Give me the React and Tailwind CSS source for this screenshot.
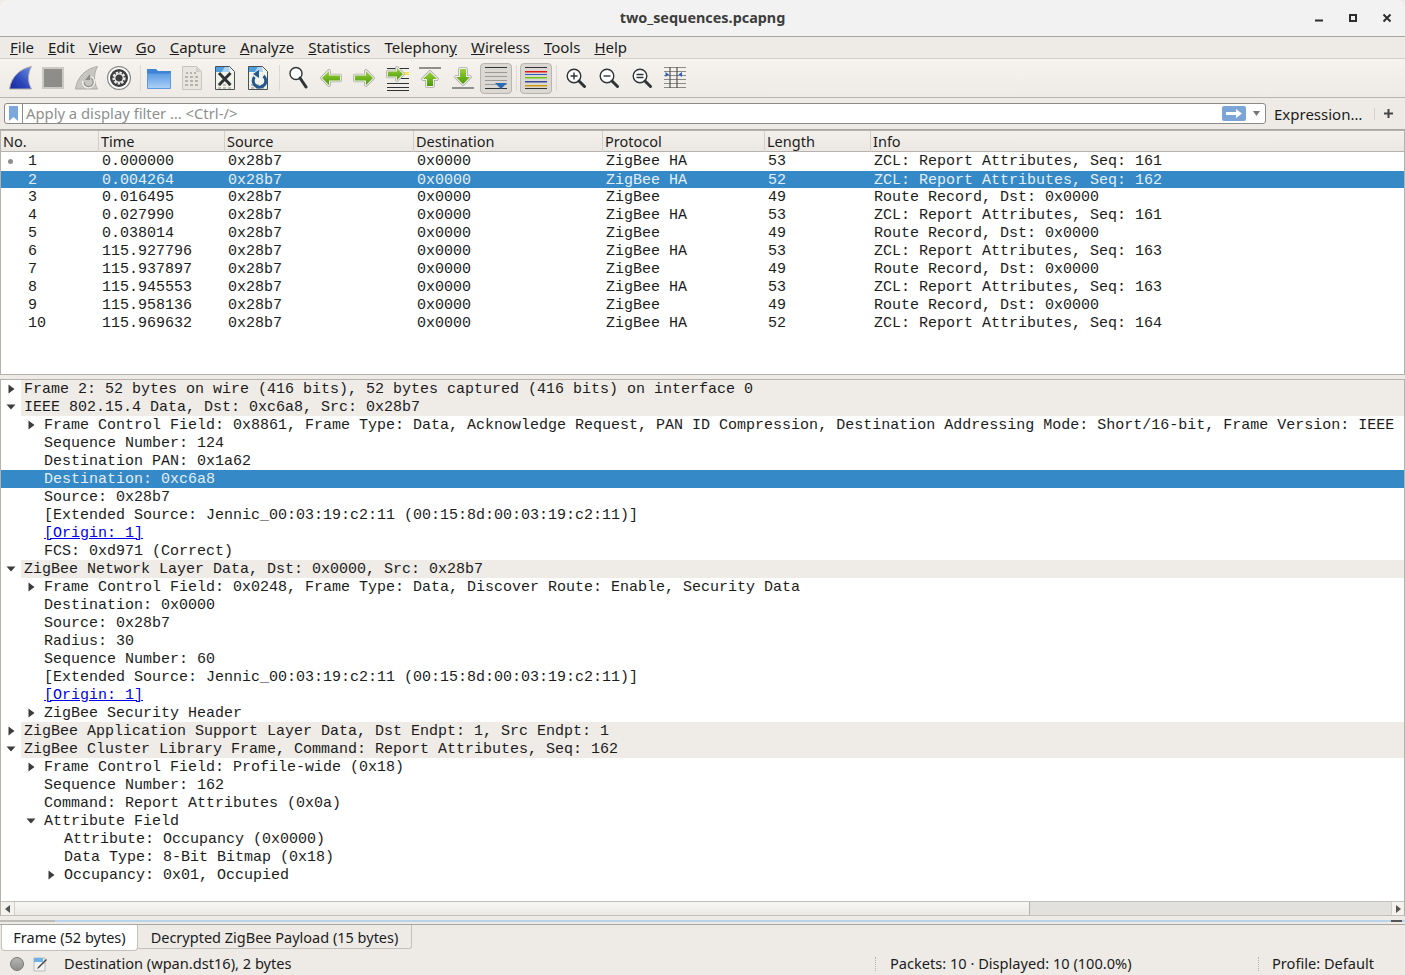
import React from 'react';

const UI_FONT = "font-['Noto_Sans',sans-serif]";

const MENUS = [
  ['', 'F', 'ile'], ['', 'E', 'dit'], ['', 'V', 'iew'], ['', 'G', 'o'], ['', 'C', 'apture'], ['', 'A', 'nalyze'],
  ['', 'S', 'tatistics'], ['Telephon', 'y', ''], ['', 'W', 'ireless'], ['', 'T', 'ools'], ['', 'H', 'elp'],
];

const PACKETS = [
  ['1', '0.000000', 'ZigBee HA', '53', 'ZCL: Report Attributes, Seq: 161'],
  ['2', '0.004264', 'ZigBee HA', '52', 'ZCL: Report Attributes, Seq: 162'],
  ['3', '0.016495', 'ZigBee', '49', 'Route Record, Dst: 0x0000'],
  ['4', '0.027990', 'ZigBee HA', '53', 'ZCL: Report Attributes, Seq: 161'],
  ['5', '0.038014', 'ZigBee', '49', 'Route Record, Dst: 0x0000'],
  ['6', '115.927796', 'ZigBee HA', '53', 'ZCL: Report Attributes, Seq: 163'],
  ['7', '115.937897', 'ZigBee', '49', 'Route Record, Dst: 0x0000'],
  ['8', '115.945553', 'ZigBee HA', '53', 'ZCL: Report Attributes, Seq: 163'],
  ['9', '115.958136', 'ZigBee', '49', 'Route Record, Dst: 0x0000'],
  ['10', '115.969632', 'ZigBee HA', '52', 'ZCL: Report Attributes, Seq: 164'],
];

// level, arrow (r = collapsed, d = expanded), text, flags
const DETAILS = [
  [0, 'r', 'Frame 2: 52 bytes on wire (416 bits), 52 bytes captured (416 bits) on interface 0'],
  [0, 'd', 'IEEE 802.15.4 Data, Dst: 0xc6a8, Src: 0x28b7'],
  [1, 'r', 'Frame Control Field: 0x8861, Frame Type: Data, Acknowledge Request, PAN ID Compression, Destination Addressing Mode: Short/16-bit, Frame Version: IEEE'],
  [1, '', 'Sequence Number: 124'],
  [1, '', 'Destination PAN: 0x1a62'],
  [1, '', 'Destination: 0xc6a8', 'selected'],
  [1, '', 'Source: 0x28b7'],
  [1, '', '[Extended Source: Jennic_00:03:19:c2:11 (00:15:8d:00:03:19:c2:11)]'],
  [1, '', '[Origin: 1]', 'link'],
  [1, '', 'FCS: 0xd971 (Correct)'],
  [0, 'd', 'ZigBee Network Layer Data, Dst: 0x0000, Src: 0x28b7'],
  [1, 'r', 'Frame Control Field: 0x0248, Frame Type: Data, Discover Route: Enable, Security Data'],
  [1, '', 'Destination: 0x0000'],
  [1, '', 'Source: 0x28b7'],
  [1, '', 'Radius: 30'],
  [1, '', 'Sequence Number: 60'],
  [1, '', '[Extended Source: Jennic_00:03:19:c2:11 (00:15:8d:00:03:19:c2:11)]'],
  [1, '', '[Origin: 1]', 'link'],
  [1, 'r', 'ZigBee Security Header'],
  [0, 'r', 'ZigBee Application Support Layer Data, Dst Endpt: 1, Src Endpt: 1'],
  [0, 'd', 'ZigBee Cluster Library Frame, Command: Report Attributes, Seq: 162'],
  [1, 'r', 'Frame Control Field: Profile-wide (0x18)'],
  [1, '', 'Sequence Number: 162'],
  [1, '', 'Command: Report Attributes (0x0a)'],
  [1, 'd', 'Attribute Field'],
  [2, '', 'Attribute: Occupancy (0x0000)'],
  [2, '', 'Data Type: 8-Bit Bitmap (0x18)'],
  [2, 'r', 'Occupancy: 0x01, Occupied'],
];

const Ico = ({ children, w = 24 }) => (
  <svg width={w} height="26" viewBox={`0 0 ${w} 26`} className="shrink-0 block">{children}</svg>
);

const Sep = () => <div className="w-px h-[26px] bg-[#dcd8d2] shrink-0" />;
const Gap = () => <div className="w-[9px] shrink-0" />;

const Defs = () => (
  <svg width="0" height="0" className="absolute">
    <defs>
      <linearGradient id="arrowGreen" x1="0" y1="0" x2="0" y2="1">
        <stop offset="0" stopColor="#9ad03a" />
        <stop offset="1" stopColor="#4a9a08" />
      </linearGradient>
      <linearGradient id="sharkBlue" x1="1" y1="0" x2="0" y2="1">
        <stop offset="0" stopColor="#6f8fe6" />
        <stop offset="0.6" stopColor="#2a44b8" />
        <stop offset="1" stopColor="#14299a" />
      </linearGradient>
      <linearGradient id="folderBlue" x1="0" y1="0" x2="0" y2="1">
        <stop offset="0" stopColor="#5c9ce4" />
        <stop offset="1" stopColor="#b0d2f6" />
      </linearGradient>
    </defs>
  </svg>
);

const GreenArrow = ({ d }) => (
  <>
    <path d={d} fill="#aaa8a2" stroke="#aaa8a2" strokeWidth="3.6" strokeLinejoin="round" />
    <path d={d} fill="#fff" stroke="#f4f3f0" strokeWidth="1.8" strokeLinejoin="round" />
    <path d={d} fill="url(#arrowGreen)" />
  </>
);

const MagGlass = ({ children }) => (
  <>
    <circle cx="10" cy="11" r="6.8" fill="#fff" stroke="#2e3436" strokeWidth="1.4" />
    <path d="M15 16l5.5 5.5" stroke="#2e3436" strokeWidth="3" strokeLinecap="round" />
    {children}
  </>
);

const Lines = ({ ys, x1 = 1, x2 = 23, color = '#2e3436' }) =>
  ys.map((y) => <path key={y} d={`M${x1} ${y}H${x2}`} stroke={color} strokeWidth="1" />);

// the capture file icons share a page with a folded blue corner
const DocBase = () => (
  <>
    <path d="M2.5 1.5h14l5 5v18h-19z" fill="#f1f2e8" stroke="#4a4f52" />
    <path d="M3 2h9l-3 5H3z" fill="#4f9fe0" />
    <path d="M12 2h4l1 5H9z" fill="#a9d2f2" />
    <path d="M5 20h3M10 20h3M15 20h3M5 23h3M10 23h3M15 23h3" stroke="#8f8f8a" strokeWidth="1.2" />
  </>
);

function Toolbar() {
  return (
    <div className="h-[39px] flex items-center bg-gradient-to-b from-[#f6f3ee] to-[#eeebe6] border-b border-[#b8b5b0] pl-[8px] shrink-0">
      {/* start capture */}
      <Ico>
        <path d="M1.5 24C3 12 12 3.5 23.5 1.5C19.5 9 19.5 17 23.5 24Z" fill="url(#sharkBlue)" stroke="#b3b1ab" strokeWidth="1" />
      </Ico>
      <Gap />
      <Ico>
        <rect x="2" y="3" width="20" height="20" fill="#8e8d89" stroke="#cbc9c4" strokeWidth="2" />
      </Ico>
      <Gap />
      <Ico>
        <path d="M1.5 24C3 12 12 3.5 23.5 1.5C19.5 9 19.5 17 23.5 24Z" fill="#c8c6c1" stroke="#adaba5" strokeWidth="1" />
        <path d="M17 12a5.5 5.5 0 1 1-8 4" fill="none" stroke="#f2f1ee" strokeWidth="2.2" />
        <path d="M16 9v6h-5z" fill="#8f8d89" />
        <path d="M17 13a4.6 4.6 0 1 1-7 4" fill="none" stroke="#8f8d89" strokeWidth="1.2" />
      </Ico>
      <Gap />
      <Ico>
        <circle cx="12" cy="13" r="11.4" fill="#fff" stroke="#858585" strokeWidth="1.2" />
        <circle cx="12" cy="13" r="9" fill="#3d3d3d" />
        <circle cx="12" cy="13" r="5.4" fill="none" stroke="#ececec" strokeWidth="2.4" strokeDasharray="2.4 1.2" />
        <circle cx="12" cy="13" r="4.2" fill="none" stroke="#ececec" strokeWidth="1.2" />
        <circle cx="12" cy="13" r="2.2" fill="#3d3d3d" />
      </Ico>
      <Gap />
      <Sep />
      <div className="w-[6px] shrink-0" />
      {/* open, save, close, reload */}
      <Ico>
        <path d="M0 4h9l2 2h13v18H0z" fill="#3f83d2" />
        <path d="M0 8.5h24V24H0z" fill="url(#folderBlue)" />
        <path d="M0.5 8.5v15h23v-15" fill="none" stroke="#5d9ae0" />
      </Ico>
      <Gap />
      <Ico>
        <path d="M2.5 1.5h14l5 5v18h-19z" fill="#e8e5df" stroke="#c6c4be" />
        <path d="M16 2v5h5z" fill="#cfccc6" />
        <path d="M6 8h2M10 8h2M14 8h2M5 12h3M10 12h3M15 12h3M5 16h3M10 16h3M15 16h3M5 20h3M10 20h3M15 20h3" stroke="#a5a39e" strokeWidth="1.6" />
      </Ico>
      <Gap />
      <Ico>
        <DocBase />
        <path d="M6 8l11.5 12M17.5 8L6 20" stroke="#2e3436" strokeWidth="3" />
      </Ico>
      <Gap />
      <Ico>
        <DocBase />
        <path d="M17.5 11a6.3 6.3 0 1 1-9 1" fill="none" stroke="#24588f" strokeWidth="3" />
        <path d="M13 5v8l-6-4z" fill="#24588f" />
      </Ico>
      <Gap />
      <Sep />
      <div className="w-[6px] shrink-0" />
      {/* find */}
      <Ico>
        <circle cx="10" cy="8.5" r="6" fill="#fff" stroke="#2e3436" strokeWidth="1.4" />
        <path d="M14 13l6 9" stroke="#2e3436" strokeWidth="3" strokeLinecap="round" />
      </Ico>
      <Gap />
      <Ico>
        <GreenArrow d="M3 13l7-7v4.5h11v5H10V20z" />
      </Ico>
      <Gap />
      <Ico>
        <GreenArrow d="M21 13l-7-7v4.5H3v5h11V20z" />
      </Ico>
      <Gap />
      <Ico>
        <Lines ys={[3.5, 18.5, 22.5, 25.5]} x1={2} x2={24} />
        <path d="M16 7h8v3h-8z" fill="#f7e25b" />
        <path d="M16 13.5H24" stroke="#2e3436" />
        <GreenArrow d="M18 9l-6-6v3.5H3v5h9V15z" />
      </Ico>
      <Gap />
      <Ico>
        <path d="M1 3H23" stroke="#8f8f8c" strokeWidth="2" />
        <GreenArrow d="M12 7l7 7h-4v7H9v-7H5z" />
      </Ico>
      <Gap />
      <Ico>
        <GreenArrow d="M12 19l7-7h-4V4H9v8H5z" />
        <path d="M1 23H23" stroke="#8f8f8c" strokeWidth="2" />
      </Ico>
      <div className="w-[5px] shrink-0" />
      {/* autoscroll, pressed */}
      <div className="w-[32px] h-[31px] rounded-[4px] border border-[#b8b5b0] bg-[#dbd8d3] flex items-center justify-center shrink-0">
        <Ico>
          <Lines ys={[2.5, 23.5]} />
          <Lines ys={[7.5, 11.5, 15.5, 19.5]} color="#9c9a96" />
          <path d="M11 18h12l-6 6z" fill="#2a6bb5" />
        </Ico>
      </div>
      <div className="w-[4px] shrink-0" />
      <Sep />
      <div className="w-[3px] shrink-0" />
      <div className="w-[32px] h-[31px] rounded-[4px] border border-[#b8b5b0] bg-[#dbd8d3] flex items-center justify-center shrink-0">
        <svg width="24" height="26" viewBox="0 0 24 26" className="shrink-0 block">
          <rect x="1" y="2" width="22" height="1" fill="#2e3436" />
          <rect x="1" y="6" width="22" height="1.5" fill="#e01818" />
          <rect x="1" y="9" width="22" height="1" fill="#2a5fbe" />
          <rect x="1" y="12" width="22" height="1.5" fill="#74c214" />
          <rect x="1" y="16" width="22" height="1.5" fill="#3a4a9a" />
          <rect x="1" y="20" width="22" height="1.5" fill="#d09a0c" />
          <rect x="1" y="23" width="22" height="1" fill="#2e3436" />
        </svg>
      </div>
      <div className="w-[4px] shrink-0" />
      <Sep />
      <div className="w-[7px] shrink-0" />
      <Ico>
        <MagGlass><path d="M6.5 11h7M10 7.5v7" stroke="#2e3436" strokeWidth="1.4" /></MagGlass>
      </Ico>
      <Gap />
      <Ico>
        <MagGlass><path d="M6.5 11h7" stroke="#2e3436" strokeWidth="1.4" /></MagGlass>
      </Ico>
      <Gap />
      <Ico>
        <MagGlass><path d="M6.5 9.5h7M6.5 12.5h7" stroke="#2e3436" strokeWidth="1.4" /></MagGlass>
      </Ico>
      <Gap />
      <Ico>
        <Lines ys={[2.5, 6.5, 10.5, 14.5, 18.5, 22.5]} color="#8a8a87" />
        <path d="M7 2v21M14 2v21" stroke="#555" strokeWidth="1.2" />
        <path d="M2.5 7l3.5 2.5L2.5 12zM19 7l-3.5 2.5L19 12z" fill="#2a5fbe" />
      </Ico>
    </div>
  );
}

function FilterBar() {
  return (
    <div className="h-[32px] flex items-center bg-[#eeebe6] border-b border-[#a9a6a1] pl-[4px] shrink-0">
      <div className="w-[1262px] h-[21px] bg-white border border-[#8c8a86] rounded-[3px] flex items-center">
        <div className="w-[18px] h-full border-r border-[#8c8a86] flex items-center justify-center shrink-0">
          <svg width="9" height="15" viewBox="0 0 9 15" className="block">
            <path d="M0 0h9v15L4.5 11 0 15z" fill="#7ba7dc" />
          </svg>
        </div>
        <span className="pl-[3px] text-[14.8px] text-[#8f8f8d] grow leading-none">Apply a display filter … &lt;Ctrl-/&gt;</span>
        <div className="w-[24px] h-[15px] rounded-[2px] bg-[#7aa5d6] flex items-center justify-center mr-[6px] shrink-0">
          <svg width="18" height="11" viewBox="0 0 18 11" className="block">
            <path d="M1 4h10V1l6 4.5L11 10V7H1z" fill="#fff" />
          </svg>
        </div>
        <svg width="10" height="6" viewBox="0 0 10 6" className="block mr-[3px] shrink-0">
          <path d="M1 0h7L4.5 5z" fill="#777" />
        </svg>
      </div>
      <span className="ml-[8px] mt-[2px] text-[15px] text-[#1c1c1c] leading-none whitespace-nowrap">Expression…</span>
      <div className="ml-[12px] w-px h-[12px] bg-[#d5d2cd]" />
      <svg width="9" height="9" viewBox="0 0 9 9" className="block ml-[9px]">
        <path d="M4.5 0v9M0 4.5h9" stroke="#444" strokeWidth="2" />
      </svg>
    </div>
  );
}

const COLS = 'grid grid-cols-[98px_126px_189px_189px_162px_106px_1fr]';

function PacketList() {
  const heads = ['No.', 'Time', 'Source', 'Destination', 'Protocol', 'Length', 'Info'];
  return (
    <div className="h-[245px] bg-white border border-[#b5b2ad] shrink-0 overflow-hidden">
      <div className={`${COLS} h-[21px] bg-gradient-to-b from-[#f3f0eb] to-[#ebe8e3] border-b border-[#b5b2ad]`}>
        {heads.map((h, i) => (
          <div key={h} className={`pl-[2px] text-[14.5px] leading-[21px] text-[#1c1c1c] ${i < 6 ? 'border-r border-[#d3d0cb]' : ''}`}>{h}</div>
        ))}
      </div>
      <div className="font-['Liberation_Mono',monospace] text-[15px] leading-[18px] text-[#1c1c1c]">
        {PACKETS.map((p) => {
          const sel = p[0] === '2';
          return (
            <div key={p[0]} className={`${COLS} h-[18px] ${sel ? 'bg-[#3489c6] text-[#e3eef6] border-t border-[#ffffff] pt-[1px]' : 'pt-[1px]'}`}>
              <div className="relative pl-[27px]">
                {p[0] === '1' && <span className="absolute left-[7px] top-[6px] w-[5px] h-[5px] rounded-full bg-[#8e8e8c]" />}
                {p[0]}
              </div>
              <div className="pl-[3px]">{p[1]}</div>
              <div className="pl-[3px]">0x28b7</div>
              <div className="pl-[3px]">0x0000</div>
              <div className="pl-[3px]">{p[2]}</div>
              <div className="pl-[3px]">{p[3]}</div>
              <div className="pl-[3px]">{p[4]}</div>
            </div>
          );
        })}
      </div>
    </div>
  );
}

function Arrow({ dir }) {
  if (!dir) return null;
  return (
    <svg width="10" height="10" viewBox="0 0 10 10" className="block">
      {dir === 'r'
        ? <path d="M2.5 0.5l6 4.5-6 4.5z" fill="#3c3c3c" />
        : <path d="M0.5 2.5h9L5 7.5z" fill="#3c3c3c" />}
    </svg>
  );
}

function DetailRow({ level, arrow, text, flag }) {
  const sel = flag === 'selected';
  const pad = level === 0 ? 'pl-[5px]' : level === 1 ? 'pl-[25px]' : 'pl-[45px]';
  return (
    <div className={`h-[18px] flex items-start whitespace-nowrap ${pad} ${sel ? 'bg-[#3489c6] text-[#e3eef6]' : ''}`}>
      <div className={`${level === 0 ? 'w-[15px]' : 'w-[18px]'} h-[18px] flex items-center shrink-0`}><Arrow dir={arrow} /></div>
      {flag === 'link'
        ? <span className="h-[18px] pt-px leading-[18px] text-[#0000ee] underline">{text}</span>
        : <span className={`h-[18px] pt-px leading-[18px] ${level === 0 ? 'grow pl-[3px] bg-[#efebe7]' : ''}`}>{text}</span>}
    </div>
  );
}

function PacketDetails() {
  return (
    <div className="h-[537px] mt-[4px] bg-white border-x border-t border-[#b5b2ad] shrink-0 overflow-hidden flex flex-col">
      <div className="grow overflow-hidden font-['Liberation_Mono',monospace] text-[15px] text-[#1c1c1c]">
        {DETAILS.map((d, i) => <DetailRow key={i} level={d[0]} arrow={d[1]} text={d[2]} flag={d[3]} />)}
      </div>
      <div className="h-[15px] flex border-y border-[#c4c1bc] shrink-0">
        <div className="w-[14px] border-r border-[#d3d0cb] bg-[#f4f2ef] flex items-center justify-center">
          <svg width="5" height="8" viewBox="0 0 5 8" className="block"><path d="M5 0v8L0 4z" fill="#555" /></svg>
        </div>
        <div className="w-[1015px] bg-gradient-to-b from-[#f8f7f5] to-[#ebe9e5] border-r border-[#b5b2ad]" />
        <div className="grow bg-[#e3e1dd]" />
        <div className="w-[13px] border-l border-[#d3d0cb] bg-[#f4f2ef] flex items-center justify-center">
          <svg width="5" height="8" viewBox="0 0 5 8" className="block"><path d="M0 0v8l5-4z" fill="#555" /></svg>
        </div>
      </div>
    </div>
  );
}

function BottomBar() {
  return (
    <>
      <div className="h-[9px] pt-[4px] border-b border-[#a9a6a1] shrink-0">
        <div className="h-[2px] flex">
          <div className="w-[55px] bg-[#bdbbb6]" />
          <div className="grow bg-[#b9d3e8]" />
          <div className="w-[11px] bg-[#555]" />
          <div className="w-[3px] bg-[#b9d3e8]" />
        </div>
      </div>
      <div className="h-[26px] flex items-start bg-[#eeebe6] shrink-0 text-[14.5px] text-[#1c1c1c]">
        <div className="ml-px w-[137px] h-[26px] bg-white border-x border-b border-[#c4c1bc] rounded-b-[4px] text-center leading-[25px]">Frame (52 bytes)</div>
        <div className="w-[274px] h-[24px] bg-[#eeebe6] border-r border-b border-[#c4c1bc] rounded-br-[3px] text-center leading-[25px]">Decrypted ZigBee Payload (15 bytes)</div>
      </div>
      <div className="grow flex items-center pt-[2px] bg-[#eeebe6] text-[14.6px] text-[#1c1c1c]">
        <span className="ml-[10px] w-[14px] h-[14px] rounded-full bg-gradient-to-b from-[#b5b5b2] to-[#8f8f8c] border border-[#777] shrink-0" />
        <svg width="15" height="15" viewBox="0 0 15 15" className="block ml-[9px] shrink-0">
          <path d="M1 1h11v13H1z" fill="#f3f3f3" stroke="#bbb" />
          <path d="M1 1h9v4H1z" fill="#6fb1e6" />
          <path d="M5 10l8-8 1 1-8 8-2 1z" fill="#444" />
        </svg>
        <span className="ml-[16px] w-[811px] shrink-0 whitespace-nowrap">Destination (wpan.dst16), 2 bytes</span>
        <span className="w-[15px] h-[14px] border-l border-dotted border-[#b5b2ad] shrink-0" />
        <span className="w-[368px] shrink-0 whitespace-nowrap">Packets: 10 · Displayed: 10 (100.0%)</span>
        <span className="w-[14px] h-[14px] border-l border-dotted border-[#b5b2ad] shrink-0" />
        <span className="whitespace-nowrap">Profile: Default</span>
      </div>
    </>
  );
}

export default function App() {
  return (
    <div className={`w-[1405px] h-[975px] flex flex-col overflow-hidden bg-[#eeebe6] ${UI_FONT}`}>
      <Defs />
      {/* Title bar */}
      <div className="h-[37px] relative flex items-center justify-center bg-[#f2f2f2] border-b border-[#a9a6a1] rounded-t-[8px] shrink-0">
        <span className="text-[14.4px] font-bold text-[#3d3d3d] leading-none">two_sequences.pcapng</span>
        <div className="absolute right-[12px] top-[12px] flex gap-[22px] items-center">
          <svg width="12" height="12" viewBox="0 0 12 12" className="block"><path d="M2 8.5h8" stroke="#2e2e2e" strokeWidth="2" /></svg>
          <svg width="12" height="12" viewBox="0 0 12 12" className="block"><rect x="3" y="3" width="6" height="6" fill="none" stroke="#2e2e2e" strokeWidth="2" /></svg>
          <svg width="12" height="12" viewBox="0 0 12 12" className="block"><path d="M2.5 2.5l7 7M9.5 2.5l-7 7" stroke="#2e2e2e" strokeWidth="2" /></svg>
        </div>
      </div>
      {/* Menu bar */}
      <div className="h-[22px] flex items-center bg-[#eeebe6] border-b border-[#d3d0cb] pl-[10px] gap-[14px] text-[15px] text-[#1c1c1c] shrink-0">
        {MENUS.map(([pre, u, rest]) => (
          <span key={pre + u + rest} className="leading-none whitespace-nowrap">
            {pre}<span className="underline">{u}</span>{rest}
          </span>
        ))}
      </div>
      <Toolbar />
      <FilterBar />
      <PacketList />
      <PacketDetails />
      <BottomBar />
    </div>
  );
}
